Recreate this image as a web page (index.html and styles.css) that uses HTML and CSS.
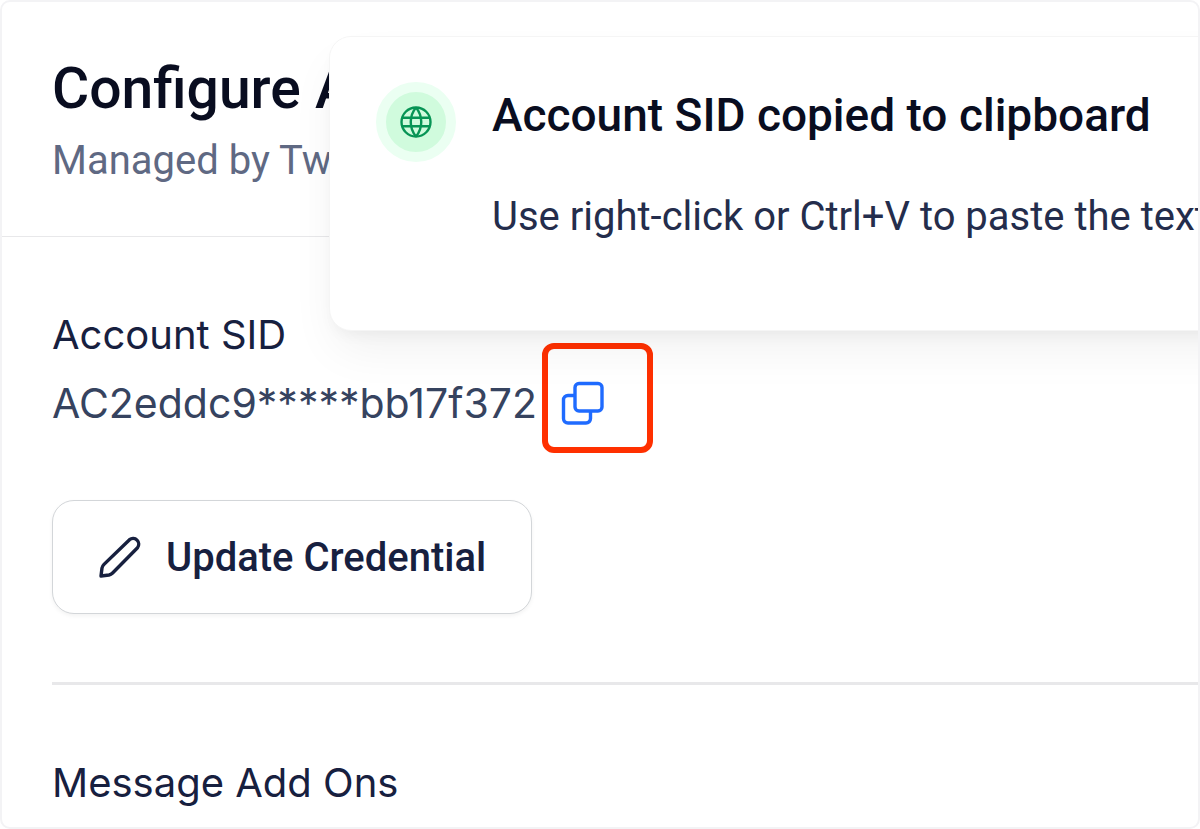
FILE: index.html
```html
<!DOCTYPE html>
<html lang="en">
<head>
    <meta charset="UTF-8">
    <title>Configure Account</title>
    <link rel="stylesheet" href="styles.css">
</head>
<body>
    <div class="panel">
        <header class="panel-header">
            <h1>Configure Account</h1>
            <p>Managed by Twilio</p>
        </header>

        <main class="panel-body">
            <section class="account">
                <h2>Account SID</h2>
                <div class="sid-row">
                    <span class="sid">AC2eddc9*****bb17f372</span>
                    <button type="button" class="copy-button" aria-label="Copy Account SID">
                        <svg viewBox="0 0 44 44" width="44" height="44" fill="none" stroke="#1f6bff" stroke-width="3.400" stroke-linejoin="round">
                            <rect x="14" y="2.500" width="27" height="27.500" rx="4"/>
                            <path d="M14 14.500H7a4.500 4.500 0 0 0-4.500 4.500v18.500a4.500 4.500 0 0 0 4.500 4.500h18a4.500 4.500 0 0 0 4.500-4.500V30"/>
                        </svg>
                    </button>
                </div>
                <button type="button" class="update-button">
                    <svg viewBox="0 0 44 44" width="44" height="44" fill="none" stroke="#17203f" stroke-width="3.400" stroke-linejoin="round">
                        <path d="M3 41l1-8q.4-2 2-3.600L31.500 4.700a5.700 5.700 0 0 1 8 8L14.600 38q-1.600 1.600-3.600 2z"/>
                    </svg>
                    Update Credential
                </button>
            </section>

            <section class="addons">
                <h2>Message Add Ons</h2>
            </section>
        </main>

        <div class="toast" role="status">
            <div class="toast-icon">
                <svg viewBox="0 0 34 34" width="34" height="34" fill="none" stroke="#079455" stroke-width="2.400">
                    <circle cx="17" cy="17" r="14.500"/>
                    <path d="M17 2.500c-7 8.500-7 20.500 0 29M17 2.500c7 8.500 7 20.500 0 29M3.500 12.700h27M3.500 21.300h27"/>
                </svg>
            </div>
            <div class="toast-text">
                <h3>Account SID copied to clipboard</h3>
                <p>Use right-click or Ctrl+V to paste the text</p>
            </div>
        </div>
    </div>
</body>
</html>
```

FILE: styles.css
```css
* {
    box-sizing: border-box;
}

body {
    margin: 0;
    font-family: Roboto, sans-serif;
    background-color: #fff;
    color: #17203f;
}

h1, h2, h3, p {
    margin: 0;
}

button {
    padding: 0;
    cursor: pointer;
}

.panel {
    position: relative;
    min-height: 100vh;
    border: 2px solid #f3f3f5;
    border-radius: 10px;
    overflow: hidden;
}

.panel-header {
    padding: 54px 50px 51px;
    border-bottom: 1px solid #e8e8ea;
}

.panel-header h1 {
    font-size: 57px;
    line-height: 66px;
    font-weight: 500;
    color: #090d20;
}

.panel-header p {
    margin-top: 15px;
    font-size: 40px;
    line-height: 48px;
    color: #5f6983;
}

.panel-body {
    padding-left: 50px;
}

.panel-body h2 {
    font-family: Inter, sans-serif;
    font-size: 40px;
    line-height: 48px;
    font-weight: 400;
}

.account {
    padding: 74px 0 68px;
    border-bottom: 3px solid #e8e8ea;
}

.sid-row {
    display: flex;
    align-items: center;
    gap: 24px;
    margin-top: 20px;
}

.sid {
    font-family: Inter, sans-serif;
    font-size: 41px;
    line-height: 48px;
    color: #36435f;
}

.copy-button {
    position: relative;
    width: 44px;
    height: 44px;
    border: none;
    background: none;
}

/* red highlight around the copy button */
.copy-button::after {
    content: "";
    position: absolute;
    box-sizing: border-box;
    left: -19px;
    top: -38px;
    width: 111px;
    height: 110px;
    border: 6px solid #ff3000;
    border-radius: 12px;
}

.copy-button svg,
.update-button svg {
    display: block;
}

.update-button {
    display: flex;
    align-items: center;
    gap: 24px;
    height: 114px;
    margin-top: 73px;
    padding: 0 45px;
    border: 1px solid #d3d6d9;
    border-radius: 22px;
    background-color: #fff;
    box-shadow: 0 2px 4px rgba(0, 0, 0, 0.05);
    font-family: Roboto, sans-serif;
    font-size: 40px;
    font-weight: 500;
    color: #17203f;
}

.addons {
    padding: 74px 0 18px;
}

.toast {
    position: absolute;
    top: 34px;
    left: 327px;
    right: -60px;
    display: flex;
    gap: 36px;
    padding: 45px 46px 89px;
    border: 1px solid #f5f5f5;
    border-radius: 22px;
    background-color: #fff;
    box-shadow: 0 24px 48px -6px rgba(0, 0, 0, 0.06), 0 8px 16px -6px rgba(0, 0, 0, 0.06);
    white-space: nowrap;
}

.toast-icon {
    display: flex;
    flex: none;
    align-items: center;
    justify-content: center;
    width: 80px;
    height: 80px;
    border: 10px solid #ebfff2;
    border-radius: 50%;
    background-color: #d0fbdd;
}

.toast-text h3 {
    margin-top: 7px;
    font-size: 46px;
    line-height: 52px;
    font-weight: 500;
    color: #090d20;
}

.toast-text p {
    margin-top: 52px;
    font-size: 40px;
    line-height: 48px;
    color: #242d4c;
}
```
